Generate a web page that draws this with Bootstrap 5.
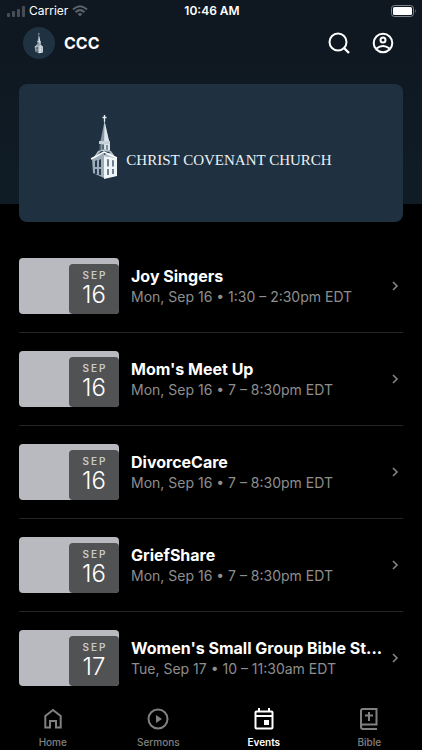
<!DOCTYPE html>
<html lang="en" data-bs-theme="dark">
<head>
<meta charset="utf-8">
<meta name="viewport" content="width=device-width, initial-scale=1">
<title>CCC Events</title>
<link href="https://cdn.jsdelivr.net/npm/bootstrap@5.3.0/dist/css/bootstrap.min.css" rel="stylesheet">
<style>
body { background: #000; color: #fff; font-family: Inter, "Liberation Sans", sans-serif; }
svg { display: block; flex: none; }
.hero-area { background: linear-gradient(#0f1720, #0f1c26); height: 204px; }
.status-bar { height: 22px; font-size: 12px; line-height: 22px; padding: 0 5px 0 7px; }
.status-bar > * { flex: 1 1 0; }
.status-time { font-weight: 600; }
.app-header { height: 42px; padding: 0 28px 0 23px; }
.avatar { width: 32px; height: 32px; background: #1f3242; }
.app-name { font-size: 16px; line-height: 24px; font-weight: 700; margin-left: 9px; }
.icon-button { padding: 0; border: 0; background: none; color: #fff; }
.header-actions { gap: 22px; }
.banner { height: 138px; margin: 20px 19px 0; padding-bottom: 10px; border-radius: 8px; background: #1f3040; }
.banner-name { font-family: "Liberation Serif", serif; font-size: 15px; line-height: 20px; color: #eef2f5; padding: 24px 0 0 6px; }
.event-list { padding: 36px 19px 64px; }
.event-item { padding: 18px 0; border-bottom: 1px solid #242424; }
.event-item:last-child { border-bottom: 0; }
.thumb { width: 100px; height: 56px; border-radius: 4px; background: #b9b9c0; }
.date-tile { width: 50px; height: 50px; border-radius: 4px; background: #515254; }
.date-month { font-size: 10px; line-height: 12px; font-weight: 600; letter-spacing: 2px; color: #c9c9c9; padding: 5px 0 0 2px; }
.date-day { font-size: 24px; line-height: 28px; font-weight: 300; color: #fff; }
.event-text { min-width: 0; margin: 0 6px 0 12px; }
.event-title { font-size: 16px; line-height: 22px; font-weight: 700; margin: 0; color: #fff; }
.event-meta { font-size: 14px; line-height: 20px; color: #8e8e8e; margin: 0; }
.chevron { color: #858585; margin-right: 4px; }
.tab-bar { height: 50px; background: #000; }
.tab-link { color: #808080; font-size: 10px; line-height: 12px; font-weight: 500; padding-top: 8px; gap: 6px; }
.tab-link.current { color: #fff; font-weight: 600; }
</style>
<script src="https://cdn.jsdelivr.net/npm/bootstrap@5.3.0/dist/js/bootstrap.bundle.min.js" defer></script>
</head>
<body>
<svg width="0" height="0" class="position-absolute" aria-hidden="true">
  <symbol id="steeple" viewBox="0 0 30 66">
    <path d="M14.5 0v7M12.5 2.500h4" stroke="#e6edf2" stroke-width="1.300"/>
    <path d="M14.500 6L9.500 31v5h10.500v-5z" fill="#8999a7"/>
    <path d="M14.500 6L14 35h6v-5z" fill="#dce5eb"/>
    <path d="M9 26h11v3H9z" fill="#c5d0d9"/>
    <path d="M10 36v-7M13 36v-6M17 36v-6" stroke="#263a4b" stroke-width="1"/>
    <path d="M8 36l7-2 6 2 5 7-12-2L2 45z" fill="#b6c4cf"/>
    <path d="M11 36l-7 7 10-3 7-3z" fill="#2c4254"/>
    <path d="M2 43l12-5v25L3 58z" fill="#9cabb8"/>
    <path d="M14 41l13 2v18l-13 3z" fill="#eff4f7"/>
    <path d="M1 44l13-7 13 6" fill="none" stroke="#fff" stroke-width="1.500"/>
    <path d="M5 46l2-1v7H5zM9 45l2-1v8H9zM5 54h2v5H5zM9 54h2v6H9z" fill="#263a4b"/>
    <path d="M17 44l2 .500v7h-2zM22 45l2 .500v6h-2zM17 54h2v6h-2zM22 54h2v5h-2z" fill="#6d8090"/>
  </symbol>
  <symbol id="chevron" viewBox="0 0 8 12"><path d="M2 2L6 6L2 10" fill="none" stroke="currentColor" stroke-width="1.600"/></symbol>
</svg>

<div class="hero-area">
  <div class="status-bar d-flex align-items-center">
    <div class="d-flex align-items-center">
      <svg width="18" height="11" viewBox="0 0 18 11" fill="#464e55"><rect y="7" width="3" height="4" rx="1"/><rect x="5" y="5" width="3" height="6" rx="1"/><rect x="10" y="3" width="3" height="8" rx="1"/><rect x="15" width="3" height="11" rx="1"/></svg>
      <span class="px-1">Carrier</span>
      <svg width="16" height="12" viewBox="0 0 16 12" fill="none" stroke="#5b636a" stroke-width="2"><path d="M1 4.500Q8-2 15 4.500M3.500 7.200Q8 3 12.500 7.200"/><path d="M8 11.500L5.600 9Q8 7 10.400 9z" fill="#5b636a" stroke="none"/></svg>
    </div>
    <div class="status-time text-center">10:46 AM</div>
    <div class="d-flex justify-content-end">
      <svg width="26" height="12" viewBox="0 0 26 12"><rect x=".5" y=".5" width="22" height="11" rx="3" fill="none" stroke="#7d8388"/><rect x="2" y="2" width="19" height="8" rx="1.500" fill="#fff"/><path d="M24 4q1.500 2 0 4z" fill="#7d8388"/></svg>
    </div>
  </div>
  <header class="app-header d-flex align-items-center">
    <span class="avatar rounded-circle d-flex align-items-center justify-content-center"><svg width="10" height="21" aria-hidden="true"><use href="#steeple"/></svg></span>
    <span class="app-name">CCC</span>
    <div class="header-actions ms-auto d-flex">
      <button class="icon-button" type="button" aria-label="Search"><svg width="22" height="22" viewBox="0 0 22 22" fill="none" stroke="currentColor" stroke-width="2"><circle cx="10" cy="10" r="8.500"/><path d="M16 16l5 5" stroke-width="2.400"/></svg></button>
      <button class="icon-button" type="button" aria-label="Profile"><svg width="22" height="22" viewBox="0 0 22 22" fill="none" stroke="currentColor" stroke-width="2"><circle cx="11" cy="11" r="9.300"/><circle cx="11" cy="8" r="2.500"/><path d="M4.500 16.500Q11 11.500 17.500 16.500"/></svg></button>
    </div>
  </header>
  <div class="banner d-flex align-items-center justify-content-center">
    <svg width="30" height="66" aria-hidden="true"><use href="#steeple"/></svg>
    <div class="banner-name text-nowrap">CHRIST COVENANT CHURCH</div>
  </div>
</div>

<main class="event-list">
  <a href="#joy-singers" class="event-item d-flex align-items-center text-decoration-none">
    <div class="thumb d-flex justify-content-end align-items-end flex-shrink-0"><div class="date-tile text-center"><div class="date-month">SEP</div><div class="date-day">16</div></div></div>
    <div class="event-text flex-grow-1"><h2 class="event-title text-truncate">Joy Singers</h2><p class="event-meta text-truncate">Mon, Sep 16 • 1:30 – 2:30pm EDT</p></div>
    <svg class="chevron" width="8" height="12"><use href="#chevron"/></svg>
  </a>
  <a href="#moms-meet-up" class="event-item d-flex align-items-center text-decoration-none">
    <div class="thumb d-flex justify-content-end align-items-end flex-shrink-0"><div class="date-tile text-center"><div class="date-month">SEP</div><div class="date-day">16</div></div></div>
    <div class="event-text flex-grow-1"><h2 class="event-title text-truncate">Mom's Meet Up</h2><p class="event-meta text-truncate">Mon, Sep 16 • 7 – 8:30pm EDT</p></div>
    <svg class="chevron" width="8" height="12"><use href="#chevron"/></svg>
  </a>
  <a href="#divorcecare" class="event-item d-flex align-items-center text-decoration-none">
    <div class="thumb d-flex justify-content-end align-items-end flex-shrink-0"><div class="date-tile text-center"><div class="date-month">SEP</div><div class="date-day">16</div></div></div>
    <div class="event-text flex-grow-1"><h2 class="event-title text-truncate">DivorceCare</h2><p class="event-meta text-truncate">Mon, Sep 16 • 7 – 8:30pm EDT</p></div>
    <svg class="chevron" width="8" height="12"><use href="#chevron"/></svg>
  </a>
  <a href="#griefshare" class="event-item d-flex align-items-center text-decoration-none">
    <div class="thumb d-flex justify-content-end align-items-end flex-shrink-0"><div class="date-tile text-center"><div class="date-month">SEP</div><div class="date-day">16</div></div></div>
    <div class="event-text flex-grow-1"><h2 class="event-title text-truncate">GriefShare</h2><p class="event-meta text-truncate">Mon, Sep 16 • 7 – 8:30pm EDT</p></div>
    <svg class="chevron" width="8" height="12"><use href="#chevron"/></svg>
  </a>
  <a href="#womens-group" class="event-item d-flex align-items-center text-decoration-none">
    <div class="thumb d-flex justify-content-end align-items-end flex-shrink-0"><div class="date-tile text-center"><div class="date-month">SEP</div><div class="date-day">17</div></div></div>
    <div class="event-text flex-grow-1"><h2 class="event-title text-truncate">Women's Small Group Bible St...</h2><p class="event-meta text-truncate">Tue, Sep 17 • 10 – 11:30am EDT</p></div>
    <svg class="chevron" width="8" height="12"><use href="#chevron"/></svg>
  </a>
</main>

<nav class="tab-bar fixed-bottom d-flex" aria-label="Main">
  <a class="tab-link flex-fill w-25 d-flex flex-column align-items-center text-decoration-none" href="#home"><svg width="22" height="22" viewBox="0 0 22 22" fill="none" stroke="currentColor" stroke-width="2"><path d="M3.300 8L11 2l7.700 6v11.500H14V13H8v6.500H3.300z"/></svg>Home</a>
  <a class="tab-link flex-fill w-25 d-flex flex-column align-items-center text-decoration-none" href="#sermons"><svg width="22" height="22" viewBox="0 0 22 22" fill="none" stroke="currentColor" stroke-width="2"><circle cx="11" cy="11" r="9.500"/><path d="M9 7l6 4-6 4z" fill="currentColor" stroke="none"/></svg>Sermons</a>
  <a class="tab-link current flex-fill w-25 d-flex flex-column align-items-center text-decoration-none" href="#events" aria-current="page"><svg width="22" height="22" viewBox="0 0 22 22" fill="none" stroke="currentColor" stroke-width="2"><rect x="2.500" y="3.500" width="17" height="17" rx="1"/><path d="M2 8h18" /><path d="M6 0v4M16 0v4"/><path d="M11 12h5v5h-5z" fill="currentColor" stroke="none"/></svg>Events</a>
  <a class="tab-link flex-fill w-25 d-flex flex-column align-items-center text-decoration-none" href="#bible"><svg width="22" height="22" viewBox="0 0 22 22" fill="none" stroke="currentColor" stroke-width="2"><path d="M19 21H5a2 2 0 0 1-2-2V3a2 2 0 0 1 2-2h13.500v15.500H5a2 2 0 0 0-2 2"/><path d="M11 4v9M7 7.500h8"/></svg>Bible</a>
</nav>
</body>
</html>
